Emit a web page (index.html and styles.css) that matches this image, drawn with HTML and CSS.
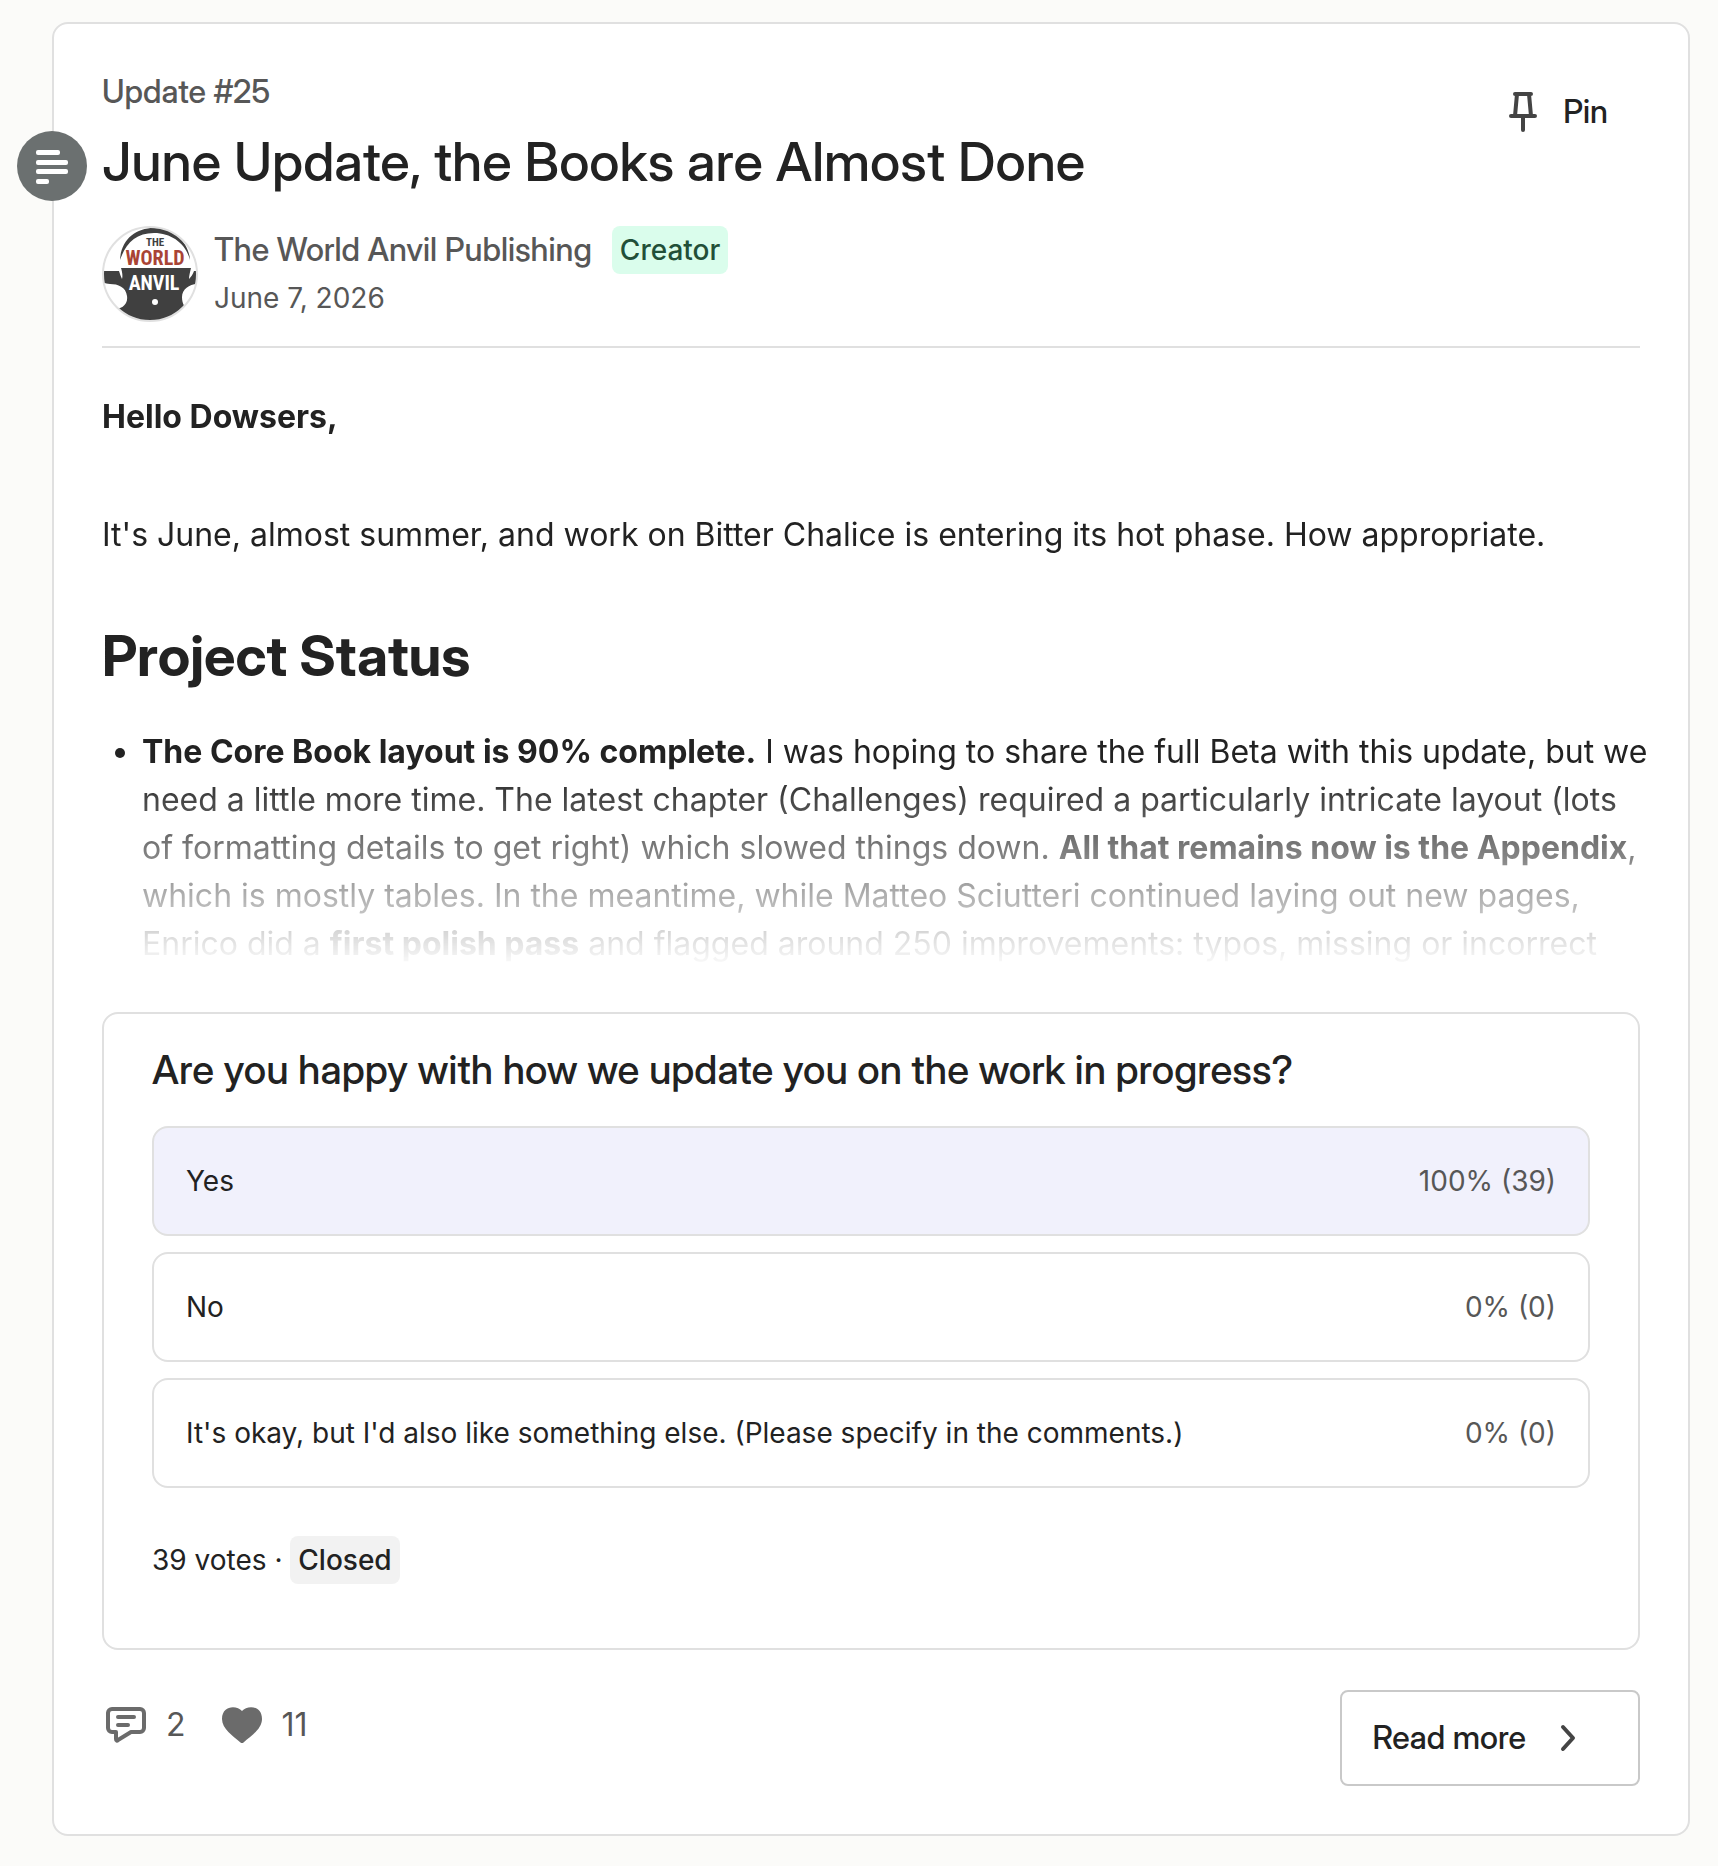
FILE: index.html
```html
<!DOCTYPE html>
<html lang="en">
<head>
<meta charset="utf-8">
<meta name="viewport" content="width=device-width, initial-scale=1">
<title>June Update, the Books are Almost Done</title>
<link rel="stylesheet" href="styles.css">
</head>
<body>
<main class="page">
  <article class="card">
    <span class="marker" aria-hidden="true">
      <svg viewBox="0 0 70 70" fill="#fff">
        <rect x="19" y="19" width="24" height="5" rx="2"/>
        <rect x="19" y="29" width="32" height="5" rx="2"/>
        <rect x="19" y="38" width="32" height="5" rx="2"/>
        <rect x="19" y="48" width="13" height="5" rx="2"/>
      </svg>
    </span>

    <header class="header">
      <div class="header-top">
        <div class="heading">
          <p class="eyebrow">Update #25</p>
          <h1 class="title">June Update, the Books are Almost Done</h1>
        </div>
        <button class="pin" type="button">
          <svg class="icon" viewBox="0 0 48 48" fill="none" stroke="#444" stroke-width="4" stroke-linecap="round" stroke-linejoin="round" aria-hidden="true">
            <path d="M16 6H32M18 6L16 28M30 6L32 28M12 28H36M24 28V42"/>
          </svg>
          Pin
        </button>
      </div>
      <div class="author">
        <svg class="avatar" viewBox="0 0 96 96" role="img" aria-label="The World Anvil">
          <defs><clipPath id="disc"><circle cx="48" cy="48" r="47"/></clipPath></defs>
          <g clip-path="url(#disc)">
            <rect width="96" height="96" fill="#fff"/>
            <path fill="#404040" d="M18 34C19 14 33 2 52 2S87 16 88 34C84 18 70 7 52 7S24 17 18 34Z"/>
            <path fill="#404040" d="M0 45H17C18 48 19 51 20 53C21 50 20 45 19 42H89C88 46 87 50 87 53C89 51 91 48 92 45H96V58C88 58 80 63 80 71C80 78 83 82 87 84V96H14V83C22 82 26 77 25 70C24 61 16 58 8 58C5 58 3 57 0 56Z"/>
            <circle cx="53" cy="76" r="3" fill="#fff"/>
            <text class="logo-the" x="53" y="20">THE</text>
            <text class="logo-word logo-red" x="53" y="39">WORLD</text>
            <text class="logo-word logo-white" x="52" y="64">ANVIL</text>
          </g>
          <circle cx="48" cy="48" r="47" fill="none" stroke="#e0e0e0" stroke-width="2"/>
        </svg>
        <div class="byline">
          <div class="name-row">
            <span class="name">The World Anvil Publishing</span>
            <span class="badge badge-creator">Creator</span>
          </div>
          <time class="date" datetime="2026-06-07">June 7, 2026</time>
        </div>
      </div>
    </header>

    <div class="body">
      <p><strong>Hello Dowsers,</strong></p>
      <p>It's June, almost summer, and work on Bitter Chalice is entering its hot phase. How appropriate.</p>
      <h2>Project Status</h2>
      <ul>
        <li><strong>The Core Book layout is 90% complete.</strong> I was hoping to share the full Beta with this update, but we<br>need a little more time. The latest chapter (Challenges) required a particularly intricate layout (lots<br>of formatting details to get right) which slowed things down. <strong>All that remains now is the Appendix</strong>,<br>which is mostly tables. In the meantime, while Matteo Sciutteri continued laying out new pages,<br>Enrico did a <strong>first polish pass</strong> and flagged around 250 improvements: typos, missing or incorrect</li>
      </ul>
    </div>

    <section class="poll">
      <h2 class="question">Are you happy with how we update you on the work in progress?</h2>
      <ul class="options">
        <li class="option option-leading"><span>Yes</span><span class="result">100% (39)</span></li>
        <li class="option"><span>No</span><span class="result">0% (0)</span></li>
        <li class="option"><span>It's okay, but I'd also like something else. (Please specify in the comments.)</span><span class="result">0% (0)</span></li>
      </ul>
      <p class="votes">39 votes · <span class="badge badge-closed">Closed</span></p>
    </section>

    <footer class="footer">
      <div class="stats">
        <span class="stat">
          <svg class="icon" viewBox="0 0 48 48" fill="none" stroke="#6b6b6b" stroke-width="4" stroke-linecap="round" stroke-linejoin="round" role="img" aria-label="Comments">
            <path d="M10 8H38A4 4 0 0 1 42 12V27A4 4 0 0 1 38 31H29L16 39C15 40 14 40 14 38V31H10A4 4 0 0 1 6 27V12A4 4 0 0 1 10 8Z"/>
            <path d="M16 16H32M16 24H26"/>
          </svg>
          2
        </span>
        <span class="stat">
          <svg class="icon" viewBox="0 0 48 48" fill="#6b6b6b" role="img" aria-label="Likes">
            <path d="M24 10C19 4 4 4 4 18C4 28 15 35 22.500 41.500Q24 42.500 25.500 41.500C33 35 44 28 44 18C44 4 29 4 24 10Z"/>
          </svg>
          11
        </span>
      </div>
      <a class="read-more" href="#">
        Read more
        <svg class="icon" viewBox="0 0 48 48" fill="none" stroke="#444" stroke-width="4" stroke-linecap="round" stroke-linejoin="round" aria-hidden="true">
          <path d="M19 13L29 24L19 35"/>
        </svg>
      </a>
    </footer>
  </article>
</main>
</body>
</html>
```

FILE: styles.css
```css
* {
  box-sizing: border-box;
}

body {
  margin: 0;
  background: #fbfbf9;
  color: #222;
  font-family: Inter, "Liberation Sans", sans-serif;
  font-size: 32px;
  line-height: 48px;
}

p,
h1,
h2,
ul {
  margin: 0;
}

.page {
  padding: 22px 28px 30px 52px;
}

.card {
  position: relative;
  padding: 48px;
  border: 2px solid #e0e0e0;
  border-radius: 16px;
  background: #fff;
}

.marker {
  position: absolute;
  top: 107px;
  left: -37px;
  width: 70px;
  height: 70px;
  border-radius: 50%;
  background: #6b7070;
}

.marker svg {
  display: block;
}

.icon {
  flex: none;
  width: 48px;
  height: 48px;
}

.eyebrow,
.title,
.pin,
.name,
.body h2,
.question,
.read-more {
  font-family: "Inter Display", Inter, "Liberation Sans", sans-serif;
}

/* Header */

.header {
  padding-bottom: 24px;
  border-bottom: 2px solid #e0e0e0;
}

.header-top {
  display: flex;
  justify-content: space-between;
  align-items: flex-start;
  margin-bottom: 32px;
}

.eyebrow {
  margin-bottom: 18px;
  color: #575757;
  font-weight: 500;
  line-height: 40px;
}

.title {
  font-size: 54px;
  font-weight: 500;
  line-height: 64px;
}

.pin {
  display: flex;
  align-items: center;
  gap: 16px;
  height: 80px;
  padding: 0 32px;
  border: 0;
  background: transparent;
  color: inherit;
  font-size: 32px;
  font-weight: 500;
  line-height: 48px;
}

.author {
  display: flex;
  gap: 16px;
}

.avatar {
  flex: none;
  width: 96px;
  height: 96px;
}

.logo-the,
.logo-word {
  font-family: "Roboto Condensed", "Liberation Sans Narrow", "DejaVu Sans Condensed", sans-serif;
  font-weight: 700;
  text-anchor: middle;
}

.logo-the {
  fill: #404040;
  font-size: 11px;
}

.logo-word {
  font-size: 20px;
}

.logo-red {
  fill: #a94435;
}

.logo-white {
  fill: #fff;
}

.byline,
.name-row {
  color: #575757;
}

.name-row {
  display: flex;
  align-items: center;
  gap: 20px;
}

.name {
  font-weight: 500;
}

.badge {
  display: inline-block;
  padding: 0 8px;
  border-radius: 8px;
  font-size: 28px;
  font-weight: 500;
}

.badge-creator {
  background: #dafdec;
  color: #224f38;
}

.badge-closed {
  background: #f2f2f2;
}

.date {
  display: block;
  font-size: 28px;
}

/* Update text, fading out towards its end */

.body {
  margin-top: 16px;
  margin-right: -16px;
  padding-top: 29px;
  -webkit-mask-image: linear-gradient(to top, transparent, #000 200px);
  mask-image: linear-gradient(to top, transparent, #000 200px);
}

.body p {
  margin-bottom: 70px;
}

.body h2 {
  margin-top: -5px;
  margin-bottom: 40px;
  font-size: 56px;
  font-weight: 700;
  line-height: 64px;
}

.body ul {
  padding-left: 40px;
}

strong {
  font-weight: 700;
}

/* Poll */

.poll {
  margin-top: 44px;
  padding: 32px 48px 64px;
  border: 2px solid #e0e0e0;
  border-radius: 16px;
}

.question {
  margin-bottom: 32px;
  font-size: 40px;
  font-weight: 500;
}

.options {
  display: flex;
  flex-direction: column;
  gap: 16px;
  padding: 0;
  list-style: none;
}

.option {
  display: flex;
  justify-content: space-between;
  gap: 32px;
  padding: 29px 32px;
  border: 2px solid #e0e0e0;
  border-radius: 16px;
  font-size: 28px;
}

.option-leading {
  background: #f1f1fc;
}

.result {
  flex: none;
  color: #575757;
}

.votes {
  margin-top: 48px;
  font-size: 28px;
}

/* Footer */

.footer {
  display: flex;
  justify-content: space-between;
  align-items: flex-start;
  margin-top: 40px;
}

.stats {
  display: flex;
  gap: 32px;
  padding-top: 11px;
  color: #575757;
}

.stat {
  display: flex;
  align-items: center;
  gap: 16px;
}

.read-more {
  display: flex;
  align-items: center;
  gap: 18px;
  height: 96px;
  padding: 0 46px 0 30px;
  border: 2px solid #c9c9c9;
  border-radius: 8px;
  color: inherit;
  font-weight: 500;
  text-decoration: none;
}
```
